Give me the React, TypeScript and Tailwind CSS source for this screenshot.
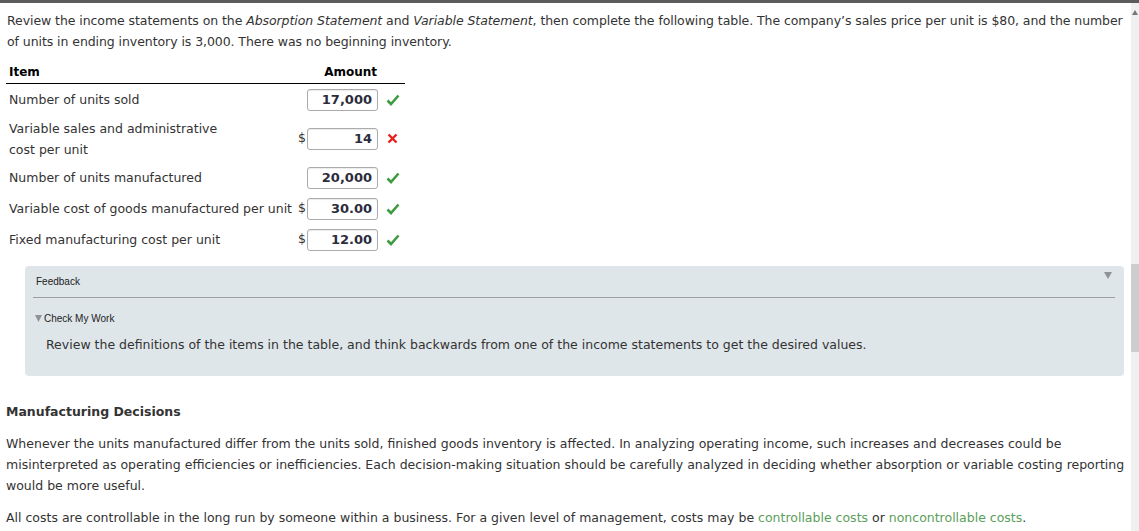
import React from 'react';

const Check = () => (
  <svg width="14" height="12" viewBox="0 0 14 12" className="block">
    <path d="M1.5 6.5 L5 10 L12.5 1.5" fill="none" stroke="#3f9b3f" strokeWidth="2.6" strokeLinejoin="miter" />
  </svg>
);

const Cross = () => (
  <svg width="11" height="11" viewBox="0 0 11 11" className="block">
    <path d="M1.5 1.5 L9.5 9.5 M9.5 1.5 L1.5 9.5" stroke="#e8201a" strokeWidth="2.4" />
  </svg>
);

interface RowProps {
  label: React.ReactNode;
  value: string;
  dollar?: boolean;
  ok?: boolean;
  tall?: boolean;
}

const Row: React.FC<RowProps> = ({ label, value, dollar, ok = true, tall }) => (
  <div className={`flex items-center ${tall ? 'h-[47px]' : 'h-[31px]'}`}>
    <div className="w-[289px] pl-[3px] leading-[21px] whitespace-nowrap">{label}</div>
    <div className="w-[12px] text-right pr-[1px]">{dollar ? '$' : ''}</div>
    <div className="w-[71px] h-[22px] border border-[#ababab] rounded-[3px] bg-white shadow-[inset_0_1px_1px_rgba(0,0,0,0.08)] flex items-center justify-end pr-[5px] font-bold text-[13px] text-[#2c2c3c]">
      {value}
    </div>
    <div className="w-[27px] flex justify-center pl-[2px]">{ok ? <Check /> : <Cross />}</div>
  </div>
);

export default function App() {
  return (
    <div className="w-[1139px] h-[531px] overflow-hidden bg-white text-[#333] text-[12.5px]" style={{ fontFamily: '"DejaVu Sans", Verdana, sans-serif' }}>
      <div className="h-[3px] bg-[#5c5c5c]" />
      <div className="flex">
        <div className="w-[1131px] pl-[7px] pr-[7px]">
          {/* intro */}
          <p className="pt-[7px] leading-[21px] whitespace-nowrap tracking-[-0.07px]">
            Review the income statements on the <i>Absorption Statement</i> and <i>Variable Statement</i>, then complete the following table. The company’s sales price per unit is $80, and the number
            <br />
            of units in ending inventory is 3,000. There was no beginning inventory.
          </p>

          {/* table */}
          <div className="w-[399px] mt-[8px] -ml-[1px]">
            <div className="flex items-end h-[24px] pb-[2px] border-b border-black font-bold text-[12px] text-black">
              <div className="w-[289px] pl-[3px]">Item</div>
              <div className="w-[82px] text-right">Amount</div>
            </div>
            <Row label="Number of units sold" value="17,000" />
            <Row
              tall
              dollar
              ok={false}
              label={
                <>
                  Variable sales and administrative
                  <br />
                  cost per unit
                </>
              }
              value="14"
            />
            <Row label="Number of units manufactured" value="20,000" />
            <Row label="Variable cost of goods manufactured per unit" value="30.00" dollar />
            <Row label="Fixed manufacturing cost per unit" value="12.00" dollar />
          </div>

          {/* feedback */}
          <div className="ml-[18px] mt-[11px] w-[1099px] h-[110px] bg-[#dfe6e9] rounded-[4px] px-[8px] pr-[9px]">
            <div className="flex items-center justify-between h-[32px] border-b border-[#9a9fa2] pl-[3px]" style={{ fontFamily: '"Liberation Sans", Arial, sans-serif' }}>
              <span className="text-[10px] text-[#222] -mt-[1px]">Feedback</span>
              <svg width="8" height="7" viewBox="0 0 8 7" className="-mt-[12px] mr-[3px]">
                <path d="M0 0 H8 L4 7 Z" fill="#8e9396" />
              </svg>
            </div>
            <div className="flex items-center gap-[2px] mt-[13px] pl-[2px] text-[10px] text-[#222]" style={{ fontFamily: '"Liberation Sans", Arial, sans-serif' }}>
              <svg width="7" height="7" viewBox="0 0 7 7">
                <path d="M0 0 H7 L3.5 7 Z" fill="#8e9396" />
              </svg>
              <span>Check My Work</span>
            </div>
            <p className="pl-[13px] mt-[8px] leading-[21px] text-[#333]">
              Review the definitions of the items in the table, and think backwards from one of the income statements to get the desired values.
            </p>
          </div>

          {/* manufacturing decisions */}
          <h3 className="font-bold mt-[25px] leading-[21px] -ml-[1px]">Manufacturing Decisions</h3>
          <p className="mt-[11px] leading-[21px] whitespace-nowrap -ml-[1px]">
            Whenever the units manufactured differ from the units sold, finished goods inventory is affected. In analyzing operating income, such increases and decreases could be
            <br />
            misinterpreted as operating efficiencies or inefficiencies. Each decision-making situation should be carefully analyzed in deciding whether absorption or variable costing reporting
            <br />
            would be more useful.
          </p>
          <p className="mt-[11px] leading-[21px] whitespace-nowrap -ml-[1px]">
            All costs are controllable in the long run by someone within a business. For a given level of management, costs may be{' '}
            <span className="text-[#5a9e5a]">controllable costs</span> or <span className="text-[#5a9e5a]">noncontrollable costs</span>.
          </p>
        </div>

        {/* scrollbar */}
        <div className="w-[8px] h-[528px] bg-[#f0f0f0] relative">
          <svg width="6" height="5" viewBox="0 0 6 5" className="absolute left-[1px] top-[7px]">
            <path d="M0 5 L3 0 L6 5 Z" fill="#777" />
          </svg>
          <div className="absolute left-0 right-0 top-[261px] h-[88px] bg-[#cdcdcd]" />
        </div>
      </div>
    </div>
  );
}
